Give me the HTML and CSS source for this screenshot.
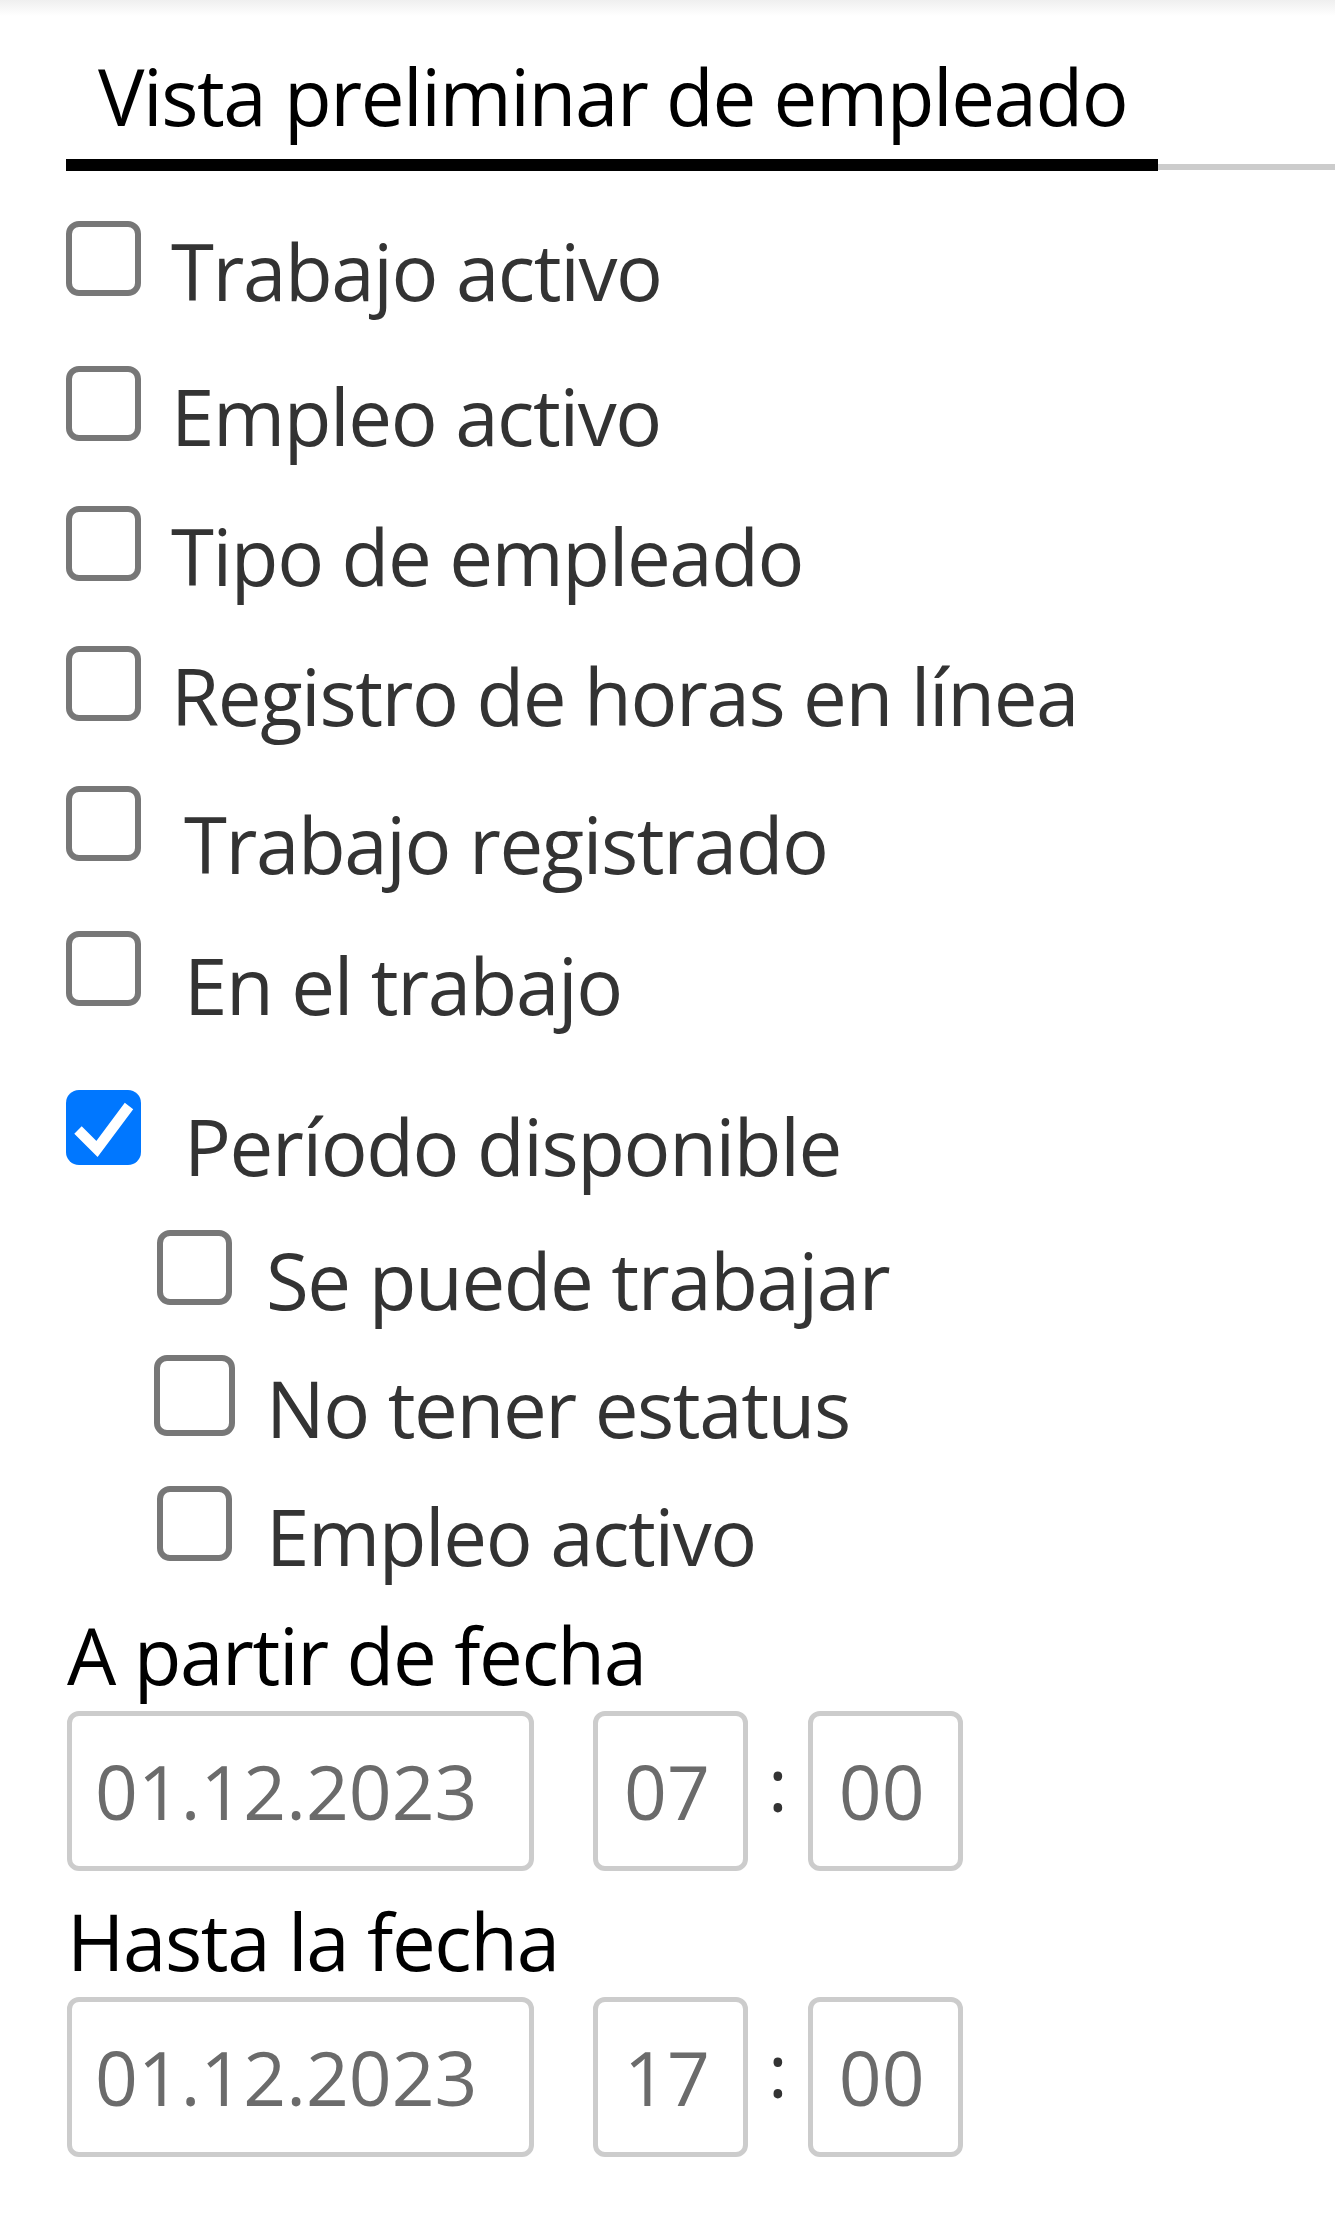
FILE: index.html
```html
<!DOCTYPE html>
<html lang="es">
<head>
<meta charset="utf-8">
<title>Vista preliminar de empleado</title>
<link rel="stylesheet" href="styles.css">
</head>
<body>
<div class="topshade"></div>
<div class="tabs">
  <div class="tab">Vista preliminar de empleado</div>
</div>

<div class="options">
  <div class="opt"><span class="box"></span><span class="label">Trabajo activo</span></div>
  <div class="opt opt--wide"><span class="box"></span><span class="label">Empleo activo</span></div>
  <div class="opt"><span class="box"></span><span class="label">Tipo de empleado</span></div>
  <div class="opt"><span class="box"></span><span class="label">Registro de horas en línea</span></div>
  <div class="opt"><span class="box"></span><span class="label label--shift8">Trabajo registrado</span></div>
  <div class="opt opt--wide"><span class="box"></span><span class="label label--shift4">En el trabajo</span></div>
  <div class="opt opt--period">
    <span class="box box--checked">
      <svg viewBox="0 0 75 75" width="75" height="75"><polyline points="12,40 31,59 63,16" fill="none" stroke="#fff" stroke-width="10.5"/></svg>
    </span>
    <span class="label label--shift6">Período disponible</span>
  </div>
  <div class="sub">
    <div class="subopt"><span class="box"></span><span class="label">Se puede trabajar</span></div>
    <div class="subopt"><span class="box box--big"></span><span class="label">No tener estatus</span></div>
    <div class="subopt"><span class="box"></span><span class="label">Empleo activo</span></div>
  </div>
</div>

<div class="dates">
  <div class="field-label">A partir de fecha</div>
  <div class="field-row">
    <div class="input input--date">01.12.2023</div>
    <div class="time">
      <div class="input input--time">07</div>
      <span class="colon">:</span>
      <div class="input input--time">00</div>
    </div>
  </div>
  <div class="field-label field-label--next">Hasta la fecha</div>
  <div class="field-row">
    <div class="input input--date">01.12.2023</div>
    <div class="time">
      <div class="input input--time">17</div>
      <span class="colon">:</span>
      <div class="input input--time">00</div>
    </div>
  </div>
</div>
</body>
</html>
```

FILE: styles.css
```css
html, body {
  margin: 0;
  padding: 0;
  background: #fff;
}
body {
  font-family: "Open Sans", "DejaVu Sans", sans-serif;
  color: #333;
  overflow-x: hidden;
}
.topshade {
  height: 16px;
  background: linear-gradient(to bottom, #efefef, #ffffff);
}
.tabs {
  margin: 27px 0 0 66px;
  display: flex;
  border-bottom: 6px solid #cccccc;
}
.tab {
  font-size: 78px;
  line-height: 106px;
  letter-spacing: -1.45px;
  color: #000;
  padding: 0 31px 10px 32px;
  border-bottom: 12px solid #000;
  margin-bottom: -7px;
  white-space: nowrap;
}
.options {
  margin: 51px 0 0 66px;
}
.opt, .subopt {
  display: flex;
  align-items: flex-start;
  height: 100px;
}
.opt + .opt {
  margin-top: 40px;
}
.opt.opt--wide {
  margin-top: 45px;
}
.opt.opt--period {
  margin-top: 59px;
}
.box {
  flex: none;
  box-sizing: border-box;
  width: 75px;
  height: 75px;
  border: 6px solid #777;
  border-radius: 13px;
  background: #fff;
}
.box--checked {
  border: none;
  background: #0077ff;
  display: block;
}
.box--checked svg {
  display: block;
}
.box--big {
  width: 81px;
  height: 81px;
  margin: -3px -3px 0 -3px;
}
.label {
  font-size: 78px;
  line-height: 100px;
  letter-spacing: -1.4px;
  color: #333;
  margin-left: 30px;
  white-space: nowrap;
}
.label--shift8 {
  margin-left: 43px;
  padding-top: 8px;
}
.label--shift4 {
  margin-left: 43px;
  padding-top: 4px;
}
.label--shift6 {
  margin-left: 43px;
  padding-top: 6px;
}
.sub {
  margin: 40px 0 0 91px;
}
.subopt + .subopt {
  margin-top: 28px;
}
.sub .label {
  margin-left: 34px;
}
.dates {
  margin: 19px 0 0 67px;
}
.field-label {
  font-size: 78px;
  line-height: 100px;
  letter-spacing: -1.4px;
  color: #000;
}
.field-label--next {
  margin-top: 20px;
}
.field-row {
  display: flex;
  align-items: center;
  margin-top: 6px;
  gap: 59px;
}
.input {
  box-sizing: border-box;
  height: 160px;
  border: 5px solid #cccccc;
  border-radius: 12px;
  display: flex;
  align-items: center;
  font-size: 75px;
  color: #6b6b6b;
  background: #fff;
}
.input--date {
  width: 467px;
  padding-left: 23px;
}
.input--time {
  width: 155px;
  justify-content: center;
  padding-right: 7px;
}
.time {
  display: flex;
  align-items: center;
}
.colon {
  font-size: 75px;
  color: #333;
  margin: -16px 20px 0;
}
```
